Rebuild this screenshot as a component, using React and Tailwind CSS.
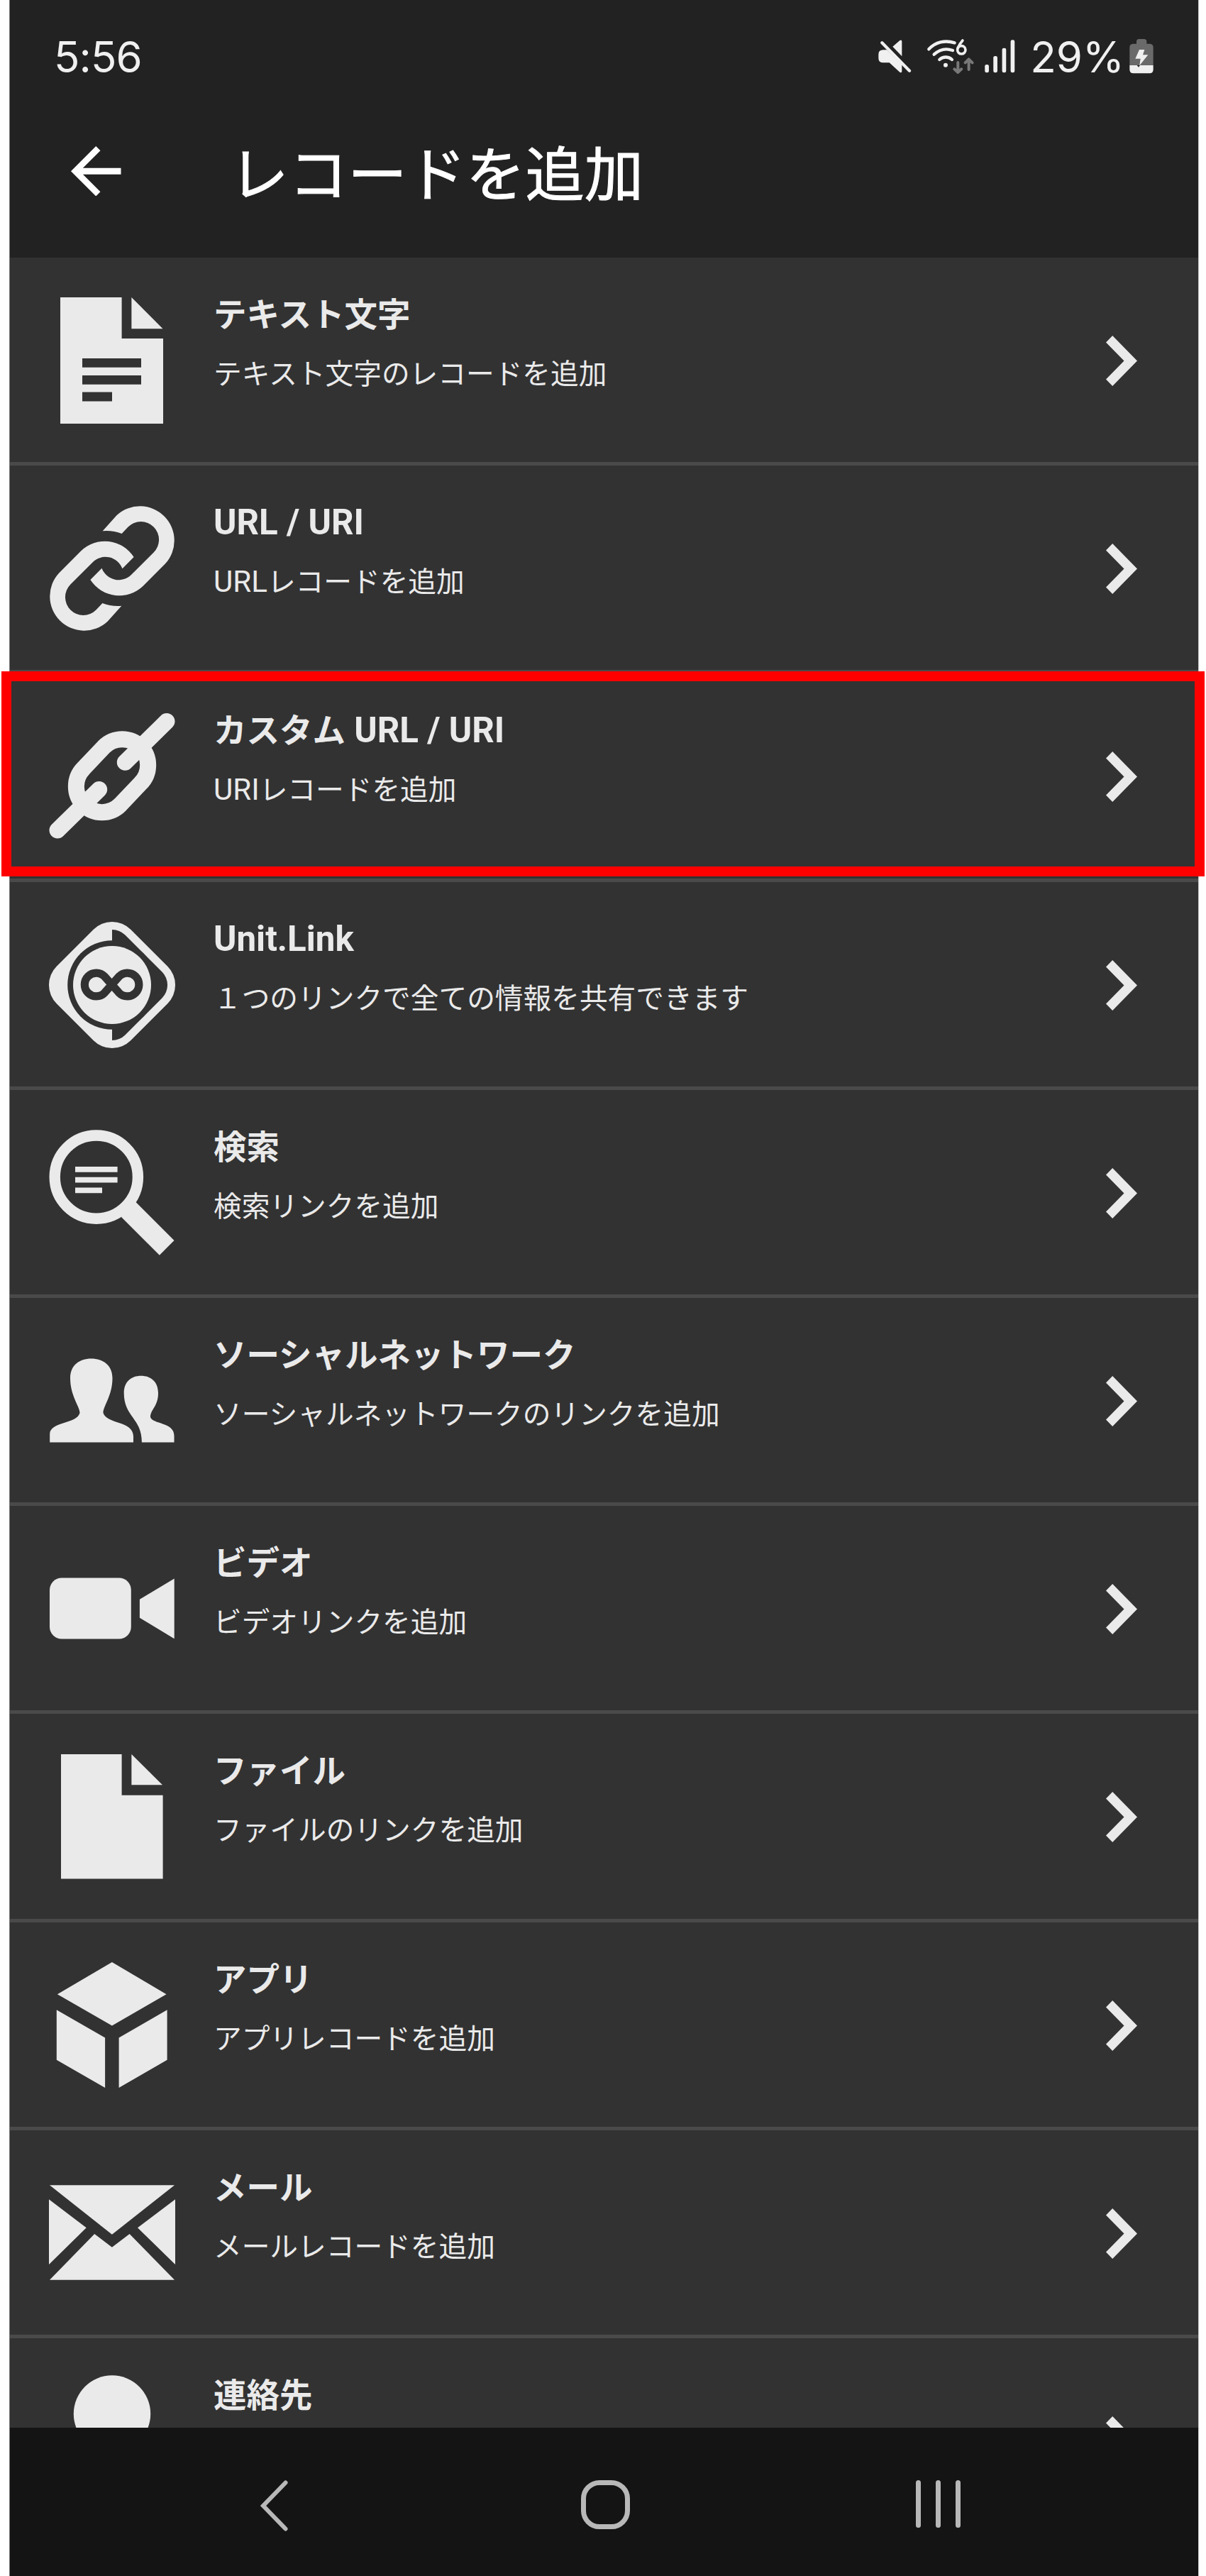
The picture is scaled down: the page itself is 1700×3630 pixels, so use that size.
const ink = "#eaeaea";
const rowBg = "#323232";

const Icon = ({ children }) => (
  <svg viewBox="0 0 178 178" className="h-[178px] w-[178px] shrink-0 overflow-visible" fill={ink}>
    {children}
  </svg>
);

const TextDocIcon = () => (
  <Icon>
    <path
      fillRule="evenodd"
      d="M16 0H102.6V58H161V178H16ZM47 86V98.7H130V86ZM47 110V122.8H130V110ZM47 133.5V146.5H89V133.5Z"
    />
    <path d="M116.4 0L160.5 44.3H116.4Z" />
  </Icon>
);

const halfLink =
  "M75.7 36.2L95.4 14.2A48.4 48.4 0 0 1 163.8 82.6L132.7 113.7A48.4 48.4 0 0 1 58.4 105.1L74.5 88.7A25.4 25.4 0 0 0 116.5 97.5L147.6 66.4A25.4 25.4 0 0 0 111.6 30.4L102.6 40.1Q90 35 75.7 36.2Z";

const LinkIcon = () => (
  <Icon>
    <path d={halfLink} />
    <path d={halfLink} transform="rotate(180 89 89)" />
  </Icon>
);

const CustomLinkIcon = () => (
  <Icon>
    <g fill="none" stroke={ink} strokeWidth="23">
      <path d="M77.5 47.4A36.4 36.4 0 0 1 129 98.9L100.5 129A36.4 36.4 0 0 1 49 77.5Z" />
      <path strokeLinecap="round" d="M166 11.5L107.3 69.3M12 165L70.7 107.5" />
    </g>
  </Icon>
);

const UnitLinkIcon = () => (
  <Icon>
    <clipPath id="right-half">
      <rect x="89" y="0" width="89" height="178" />
    </clipPath>
    <rect x="15.2" y="15.2" width="147.6" height="147.6" rx="37" transform="rotate(45 89 89)" />
    <g clipPath="url(#right-half)">
      <rect x="26.2" y="26.2" width="125.6" height="125.6" rx="26" fill={rowBg} transform="rotate(45 89 89)" />
    </g>
    <circle cx="89" cy="89" r="62.8" fill={rowBg} />
    <circle cx="89" cy="89" r="55" />
    <path
      fill="none"
      stroke={rowBg}
      strokeWidth="11.2"
      strokeLinejoin="round"
      d="M88.6 88.5L78.6 77.2A16.4 16.4 0 1 0 78.6 99.8L98.6 77.2A16.4 16.4 0 1 1 98.6 99.8Z"
    />
  </Icon>
);

const SearchIcon = () => (
  <Icon>
    <circle cx="66.8" cy="66.6" r="58.6" fill="none" stroke={ink} strokeWidth="15.4" />
    <path d="M122.5 102L176.5 156L155.8 176.7L102.5 123.5L100 110L108 102Z" />
    <path d="M37 51.9H96.6V59.7H37ZM37 66.8H96.6V74.4H37ZM37 81.5H75V89.3H37Z" />
  </Icon>
);

const PeopleIcon = () => (
  <Icon>
    <path d="M1.2 147.5V136C1.2 118 39 122 43.5 106C43.5 97 30 82 30 57C30 39 43 29.6 59.6 29.6S89.5 39 89.5 57C89.5 82 76.5 96 76.5 106C81 122 119 117 119 139V147.5Z" />
    <path d="M130.9 147.5C130.9 113 105.7 112 105.7 78C105.7 62 116 53.7 129.8 53.7S154 62 154 78C154 97 143 101 143 112C146 122 176.5 119 176.5 138V147.5Z" />
  </Icon>
);

const VideoIcon = () => (
  <Icon>
    <rect x="1" y="45.5" width="114.8" height="86.1" rx="17" />
    <path d="M176.7 46.6V131.2L127.9 101.7V75.7Z" />
  </Icon>
);

const FileIcon = () => (
  <Icon>
    <path d="M17 1H102.6V58.8H160.6V176.4H17Z" />
    <path d="M116.4 1L160 44.3H116.4Z" />
  </Icon>
);

const AppIcon = () => (
  <Icon>
    <path d="M88.9 0L165.5 45.2L88.9 89.6L11.9 45.2Z" />
    <path d="M10.8 67.2L79.1 106.5V177L10.8 137.8ZM166.6 67.2L98.6 106.5V177L166.6 137.8Z" />
  </Icon>
);

const MailIcon = () => (
  <Icon>
    <path d="M1 21.3H177L88.9 90.7Z" />
    <path d="M0 41.2L52.7 81.2L0 133ZM178 41.2L125 81.2L178 133Z" />
    <path d="M1 154.8L64.2 90L88.9 108.7L113.6 90L177 154.8Z" />
  </Icon>
);

const ContactIcon = () => (
  <Icon>
    <circle cx="89" cy="50.5" r="54.2" />
  </Icon>
);

const rows = [
  { title: "テキスト文字", sub: "テキスト文字のレコードを追加", icon: TextDocIcon },
  { title: "URL / URI", sub: "URLレコードを追加", icon: LinkIcon },
  { title: "カスタム URL / URI", sub: "URIレコードを追加", icon: CustomLinkIcon, highlighted: true },
  { title: "Unit.Link", sub: "１つのリンクで全ての情報を共有できます", icon: UnitLinkIcon },
  { title: "検索", sub: "検索リンクを追加", icon: SearchIcon },
  { title: "ソーシャルネットワーク", sub: "ソーシャルネットワークのリンクを追加", icon: PeopleIcon },
  { title: "ビデオ", sub: "ビデオリンクを追加", icon: VideoIcon },
  { title: "ファイル", sub: "ファイルのリンクを追加", icon: FileIcon },
  { title: "アプリ", sub: "アプリレコードを追加", icon: AppIcon },
  { title: "メール", sub: "メールレコードを追加", icon: MailIcon },
  { title: "連絡先", sub: "連絡先レコードを追加", icon: ContactIcon },
];

// Latin runs are set slightly larger than the Japanese text around them.
function Mixed({ text }) {
  return text.split(/([\x20-\x7e]+)/).map((part, i) =>
    i % 2 === 1 ? (
      <span key={i} className="text-[1.06em] leading-none">
        {part}
      </span>
    ) : (
      part
    )
  );
}

function Row({ title, sub, icon: RowIcon, highlighted }) {
  return (
    <li className="relative flex h-[293.2px] shrink-0 items-start border-b-[5px] border-[#4a4a4a] pl-[55px] pr-[86px]">
      <div className="pt-14">
        <RowIcon />
      </div>
      <div className="ml-[54px] flex grow flex-col whitespace-nowrap pt-[46px] text-[#eaeaea]">
        <h2 className="h-[70px] text-[46.5px] font-bold leading-[70px]">
          <Mixed text={title} />
        </h2>
        <p className="mt-[19px] h-[60px] text-[39.7px] leading-[60px]">
          <Mixed text={sub} />
        </p>
      </div>
      <svg viewBox="0 0 44 71" className="mt-[110px] h-[71px] w-11 shrink-0" fill={ink}>
        <path d="M9.2 0L44 35.5L9.2 71L0 61.5L25.5 35.5L0 9.5Z" />
      </svg>
      {highlighted && (
        <div className="absolute -left-3 -right-[9px] -top-[3px] z-10 h-[289px] border-[14px] border-[#ff0000]" />
      )}
    </li>
  );
}

function StatusBar() {
  return (
    <div className="flex h-[160px] items-start justify-between pl-[62px] pr-[63px] pt-[50px] font-['Inter',sans-serif] text-[60px] leading-[60px] text-[#f0f0f0]">
      <span className="tracking-[-0.015em]">5:56</span>
      <div className="flex items-start">
        <svg viewBox="110 150 590 180" className="mr-[19px] h-[60px] w-[196.6px]" fill="none" stroke="#f0f0f0">
          <g fill="#f0f0f0" stroke="none">
            <path d="M134 211H150L213 272V300Q213 310 204 305L160 265H134Q114 265 114 246V230Q114 211 134 211Z" />
            <path d="M174 197L204 171Q213 166 213 176V238Z" />
            <circle cx="398" cy="275" r="9" />
            <rect x="564" y="273" width="17" height="34" rx="7" />
            <rect x="600" y="237" width="17" height="70" rx="7" />
            <rect x="637" y="203" width="17" height="104" rx="7" />
            <rect x="673" y="169" width="17" height="138" rx="7" />
          </g>
          <path d="M129 181L245 299" strokeWidth="13" strokeLinecap="round" />
          <g strokeWidth="13" strokeLinecap="round">
            <path d="M327 208C355 178 395 168 436 181" />
            <path d="M349 230C372 209 400 203 428 213" />
            <path d="M372 252C387 238 410 238 425 252" />
          </g>
          <circle cx="465" cy="211" r="17" strokeWidth="11" />
          <path d="M449 204Q456 187 470 171" strokeWidth="11" strokeLinecap="round" />
          <g stroke="#787878" strokeWidth="12" strokeLinecap="round" strokeLinejoin="round">
            <path d="M450 264V305M435 292L450 306L465 292" />
            <path d="M496 294V251M481 265L496 250L511 265" />
          </g>
        </svg>
        <span className="mr-[7px]">29%</span>
        <svg viewBox="1175 150 102 180" className="h-[60px] w-[34px]">
          <path
            fill="#6a6a6a"
            d="M1205 176Q1205 165 1216 165H1237Q1248 165 1248 176V185H1262Q1276 187 1276 200V276H1176V200Q1176 187 1190 185H1205Z"
          />
          <path fill="#f0f0f0" d="M1176 276H1276V294Q1276 310 1260 310H1192Q1176 310 1176 294Z" />
          <path fill="#f0f0f0" d="M1217 210H1239L1232 232H1254L1218 277L1222 248H1200Z" />
          <path fill="#222222" d="M1207 276H1220L1214 284Z" />
        </svg>
      </div>
    </div>
  );
}

export default function App() {
  return (
    <div className="h-[3630px] w-[1700px] overflow-hidden bg-white pl-[13px] font-[Roboto,'Noto_Sans_CJK_JP',sans-serif]">
      <div className="flex h-full w-[1677px] flex-col border-x border-l-[#777777] border-r-[#c4c4c4]">
        <header className="h-[363px] shrink-0 bg-[#222222]">
          <StatusBar />
          <div className="flex h-[162px] items-center pl-[86px]">
            <svg viewBox="4 4 16 16" className="h-[70.5px] w-[70.5px]" fill="#ffffff">
              <path d="M20 11H7.83l5.59-5.59L12 4l-8 8 8 8 1.41-1.41L7.83 13H20v-2z" />
            </svg>
            <h1 className="ml-[153px] pt-[13px] text-[83.4px] leading-[120px] text-white [-webkit-text-stroke:1px_white]">
              レコードを追加
            </h1>
          </div>
        </header>
        {/* The list is cut off by the navigation bar, the highlight frame reaches past its sides */}
        <ul className="flex h-[3058px] shrink-0 flex-col bg-[#323232] [clip-path:inset(0_-14px)]">
          {rows.map((row) => (
            <Row key={row.title} {...row} />
          ))}
        </ul>
        <nav className="relative z-10 flex grow items-start bg-[#141414] pl-[351px] pt-[74px]">
          <svg viewBox="0 0 42 72" className="h-[72px] w-[42px]" fill="none" stroke="#b8b8b8" strokeWidth="6">
            <path strokeLinecap="round" d="M37.5 3.5L6 36L37.5 68.5" />
          </svg>
          <div className="ml-[412px] h-[69px] w-[69px] rounded-[26px] border-[7px] border-[#b8b8b8]" />
          <div className="ml-[403px] flex gap-[21px]">
            <span className="h-[67px] w-[7px] rounded-full bg-[#b8b8b8]" />
            <span className="h-[67px] w-[7px] rounded-full bg-[#b8b8b8]" />
            <span className="h-[67px] w-[7px] rounded-full bg-[#b8b8b8]" />
          </div>
        </nav>
      </div>
    </div>
  );
}
